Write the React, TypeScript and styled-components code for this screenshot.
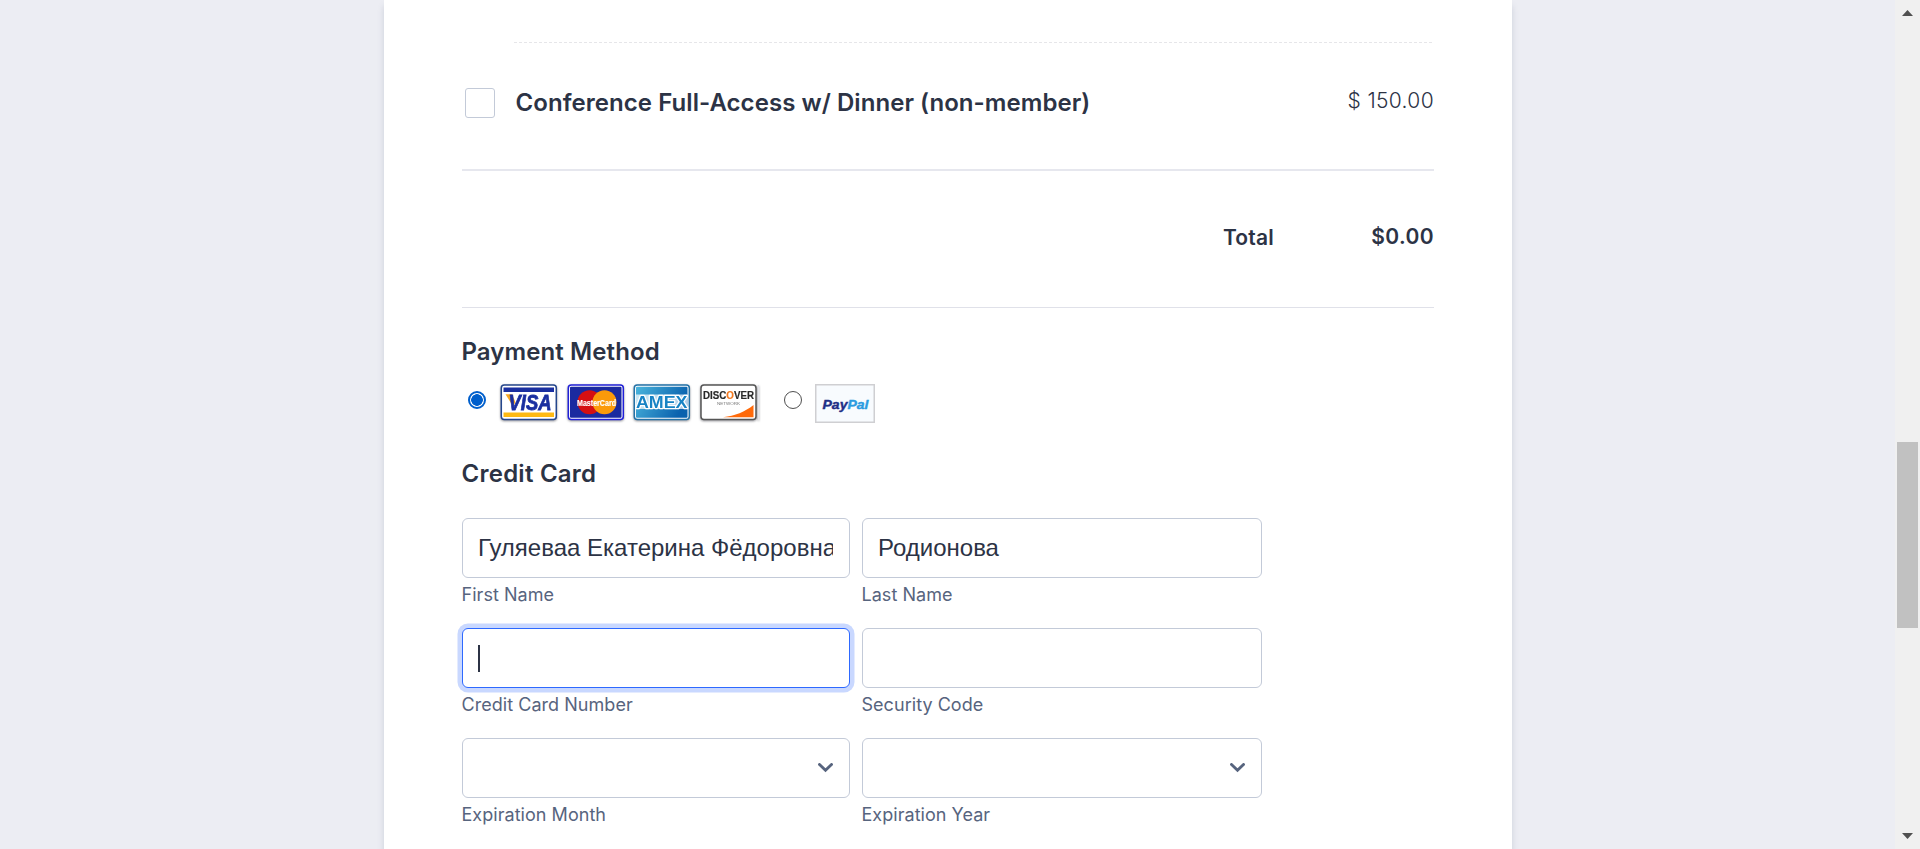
import React from "react";
import styled, { createGlobalStyle, css } from "styled-components";

const GlobalStyle = createGlobalStyle`
  *, *::before, *::after { box-sizing: border-box; }
  body { margin: 0; overflow: hidden; background: #ecedf3; }
`;

const Page = styled.div`
  display: flex;
  justify-content: space-between;
  height: 849px;
  overflow: hidden;
  padding-left: 384px;
  background: #ecedf3;
  color: #2c3345;
  font-family: Inter, "Liberation Sans", sans-serif;
`;

const FormCard = styled.main`
  width: 1128px;
  height: 100%;
  padding: 42px 78px 0;
  background: #fff;
  box-shadow: 0 6px 6px rgba(87, 100, 126, 0.21);
`;

const DashedRule = styled.div`
  height: 1px;
  margin-left: 52px;
  background: repeating-linear-gradient(90deg, #e6e6e9 0 3px, transparent 3px 5px);
`;

const ProductRow = styled.label`
  display: flex;
  align-items: flex-start;
  height: 128px;
  padding: 45px 0 0 3px;
  border-bottom: 2px solid #e6e7ee;
`;

const Checkbox = styled.span`
  width: 30px;
  height: 30px;
  border: 1px solid #c3cad8;
  border-radius: 3px;
`;

const ProductName = styled.span`
  flex: 1;
  margin-left: 20.5px;
  font-size: 24px;
  font-weight: 580;
  line-height: 30px;
  letter-spacing: 0.06px;
`;

const Price = styled.span`
  margin-top: -2px;
  font-size: 21px;
  font-weight: 360;
  line-height: 30px;
  letter-spacing: 0.35px;
`;

const TotalRow = styled.div`
  display: flex;
  justify-content: flex-end;
  align-items: flex-start;
  height: 137px;
  padding-top: 51px;
  border-bottom: 1px solid #e0e1e9;
  font-size: 21px;
  font-weight: 580;
  line-height: 30px;
`;

const TotalLabel = styled.span`
  margin-top: 1px;
  letter-spacing: 0.2px;
`;

const TotalAmount = styled.span`
  width: 160px;
  text-align: right;
  letter-spacing: 0.4px;
`;

const Heading = styled.h2<{ $top: number; $tracking: number }>`
  margin: ${(p) => p.$top}px 0 0 -0.5px;
  font-size: 24px;
  font-weight: 640;
  line-height: 30px;
  letter-spacing: ${(p) => p.$tracking}px;
`;

const Methods = styled.div`
  display: flex;
  align-items: flex-start;
  height: 42px;
  margin-top: 17px;
  padding-left: 6px;
`;

const Radio = styled.span<{ $checked?: boolean }>`
  width: 18px;
  height: 18px;
  margin-top: 7px;
  border: 1px solid #4f4f4f;
  border-radius: 50%;
  ${(p) =>
    p.$checked &&
    css`
      border: 2px solid #005fcc;
      background: radial-gradient(circle, #005fcc 0 5.5px, #fff 6.1px);
    `}
`;

const CardArt = styled.svg`
  display: block;
  width: 60px;
  height: 40px;
  overflow: visible;
  filter: drop-shadow(0 1px 1px rgba(60, 60, 70, 0.55));
`;

const CardList = styled.div`
  display: flex;
  gap: 6.6px;
  margin: 0 24px 0 13px;
  padding-right: 1px;
`;

const PaypalArt = styled.svg`
  display: block;
  margin-left: 13px;
`;

const FieldGrid = styled.div`
  display: grid;
  grid-template-columns: 388px 400px;
  column-gap: 12px;
  grid-auto-rows: 110px;
  margin-top: 29px;
`;

const Field = styled.div`
  display: flex;
  flex-direction: column;
`;

const Control = styled.div<{ $focused?: boolean }>`
  display: flex;
  align-items: center;
  height: 60px;
  padding: 0 16px 0 15px;
  border: 1px solid #c3cad8;
  border-radius: 6px;
  background: #fff;
  ${(p) =>
    p.$focused &&
    css`
      border-color: #2e69ff;
      box-shadow: 0 0 0 4.5px rgba(46, 105, 255, 0.26);
    `}
`;

const Value = styled.span`
  overflow: hidden;
  flex: 1;
  font-family: "Liberation Sans", Arial, sans-serif;
  font-size: 24px;
  line-height: 30px;
  white-space: nowrap;
`;

const Caret = styled.span`
  width: 2px;
  height: 27px;
  background: #2c3345;
`;

const Chevron = styled.svg`
  margin-left: auto;
`;

const SubLabel = styled.span`
  margin: 6px 0 0 -0.5px;
  color: #57647e;
  font-size: 18px;
  line-height: 22px;
  letter-spacing: 0.04px;
`;

const Scrollbar = styled.div`
  display: flex;
  flex-direction: column;
  align-items: center;
  width: 25px;
  padding: 10px 0;
  background: #f0f0f0;
`;

const Thumb = styled.div`
  width: 21px;
  height: 186px;
  margin: 426px 0 auto;
  background: #c1c1c1;
`;

const VisaCard = () => (
  <CardArt viewBox="0 0 60 40">
    <rect x="2.3" y="1" width="55" height="34.5" rx="3" fill="#fff" stroke="#24468c" strokeWidth="1.5" />
    <path d="M4.5 3.5h50.500v4.500H4.500z" fill="#1a2fa0" />
    <path d="M4.500 28.500h50.500v4.500H4.500z" fill="#fdb913" />
    <path d="M6.500 10.300h6.500l3.500 8-2.500 4z" fill="#f7a823" />
    <text x="9.500" y="26" fill="#1a2fa0" stroke="#1a2fa0" strokeWidth="0.800" fontFamily="Liberation Sans" fontSize="22" fontWeight="700" fontStyle="italic" textLength="43" lengthAdjust="spacingAndGlyphs">VISA</text>
  </CardArt>
);

const MasterCard = () => (
  <CardArt viewBox="0 0 60 40">
    <rect x="2.300" y="1" width="55" height="34.500" rx="3" fill="#fff" stroke="#2020d8" strokeWidth="1.500" />
    <rect x="4" y="2.700" width="51.500" height="31" rx="1" fill="#1a2aa0" />
    <circle cx="23.500" cy="18.200" r="12" fill="#d50f12" />
    <circle cx="38.500" cy="18.200" r="12" fill="#fb9a0a" />
    <text x="11" y="21.700" fill="#fff" stroke="#fff" strokeWidth="0.200" fontFamily="Liberation Sans" fontSize="9.500" fontWeight="700" textLength="39" lengthAdjust="spacingAndGlyphs">MasterCard</text>
  </CardArt>
);

const AmexCard = () => (
  <CardArt viewBox="0 0 60 40">
    <defs>
      <linearGradient id="amex" x1="0" y1="0" x2="1" y2="0.300">
        <stop offset="0" stopColor="#49b4dc" />
        <stop offset="1" stopColor="#0a62ae" />
      </linearGradient>
    </defs>
    <rect x="2.300" y="1" width="55" height="34.500" rx="3" fill="#fff" stroke="#2272a8" strokeWidth="1.500" />
    <rect x="4" y="2.700" width="51.500" height="31" rx="1" fill="url(#amex)" />
    <rect x="4" y="10.500" width="51.500" height="14.500" fill="#fff" opacity="0.700" />
    <text x="4" y="23.700" fill="#1783c4" stroke="#fff" strokeWidth="2.400" paintOrder="stroke" strokeLinejoin="round" fontFamily="Liberation Sans" fontSize="17" fontWeight="700" textLength="51.500" lengthAdjust="spacingAndGlyphs">AMEX</text>
  </CardArt>
);

const DiscoverCard = () => (
  <CardArt viewBox="0 0 60 40">
    <rect x="2" y="1" width="55" height="34.500" rx="3" fill="#fff" stroke="#555" strokeWidth="1.500" />
    <path d="M24 33.300c12-1.500 22-5.500 30.500-12.300v12.300z" fill="#ff6a0a" />
    <text x="4" y="15" fill="#292929" stroke="#292929" strokeWidth="0.200" fontFamily="Liberation Sans" fontSize="11.500" fontWeight="700" textLength="51" lengthAdjust="spacingAndGlyphs">DISC<tspan fill="#f47a20" stroke="#f47a20">O</tspan>VER</text>
    <text x="18" y="21" fill="#777" fontFamily="Liberation Sans" fontSize="3.800" textLength="23" lengthAdjust="spacingAndGlyphs">NETWORK</text>
    <path d="M59.500 1v35" stroke="#e3e5ea" strokeWidth="1" />
  </CardArt>
);

const PaypalCard = () => (
  <PaypalArt width="60" height="39" viewBox="0 0 60 39">
    <rect x="0.750" y="0.750" width="58.500" height="37.500" fill="#f8fbfe" stroke="#cfcfd2" strokeWidth="1.500" />
    <text x="7.500" y="24.500" fontFamily="Liberation Sans" fontSize="13.500" fontWeight="700" fontStyle="italic" textLength="46" lengthAdjust="spacingAndGlyphs" fill="#1f2f86" stroke="#1f2f86" strokeWidth="0.400">Pay<tspan fill="#2b9be0" stroke="#2b9be0">Pal</tspan></text>
  </PaypalArt>
);

const SelectArrow = () => (
  <Chevron width="15" height="10" viewBox="0 0 15 10">
    <path d="M1.500 1.500 7.500 7.200l6-5.700" fill="none" stroke="#57647e" strokeWidth="2.900" strokeLinecap="round" />
  </Chevron>
);

type FieldSpec = { label: string; kind: "text" | "select"; value?: string; focused?: boolean };

const fields: FieldSpec[] = [
  { label: "First Name", kind: "text", value: "Гуляеваа Екатерина Фёдоровна" },
  { label: "Last Name", kind: "text", value: "Родионова" },
  { label: "Credit Card Number", kind: "text", focused: true },
  { label: "Security Code", kind: "text" },
  { label: "Expiration Month", kind: "select" },
  { label: "Expiration Year", kind: "select" },
];

export default function App() {
  return (
    <Page>
      <GlobalStyle />
      <FormCard>
        <DashedRule />
        <ProductRow>
          <Checkbox />
          <ProductName>Conference Full-Access w/ Dinner (non-member)</ProductName>
          <Price>$ 150.00</Price>
        </ProductRow>
        <TotalRow>
          <TotalLabel>Total</TotalLabel>
          <TotalAmount>$0.00</TotalAmount>
        </TotalRow>
        <Heading $top={29} $tracking={0.1}>Payment Method</Heading>
        <Methods>
          <Radio $checked />
          <CardList>
            <VisaCard />
            <MasterCard />
            <AmexCard />
            <DiscoverCard />
          </CardList>
          <Radio />
          <PaypalCard />
        </Methods>
        <Heading $top={33} $tracking={0.25}>Credit Card</Heading>
        <FieldGrid>
          {fields.map((f) => (
            <Field key={f.label}>
              <Control $focused={f.focused}>
                {f.value && <Value>{f.value}</Value>}
                {f.focused && <Caret />}
                {f.kind === "select" && <SelectArrow />}
              </Control>
              <SubLabel>{f.label}</SubLabel>
            </Field>
          ))}
        </FieldGrid>
      </FormCard>
      <Scrollbar>
        <svg width="11" height="6" viewBox="0 0 11 6"><path d="M0 6 5.500 0 11 6z" fill="#505050" /></svg>
        <Thumb />
        <svg width="11" height="6" viewBox="0 0 11 6"><path d="M0 0h11L5.500 6z" fill="#505050" /></svg>
      </Scrollbar>
    </Page>
  );
}
